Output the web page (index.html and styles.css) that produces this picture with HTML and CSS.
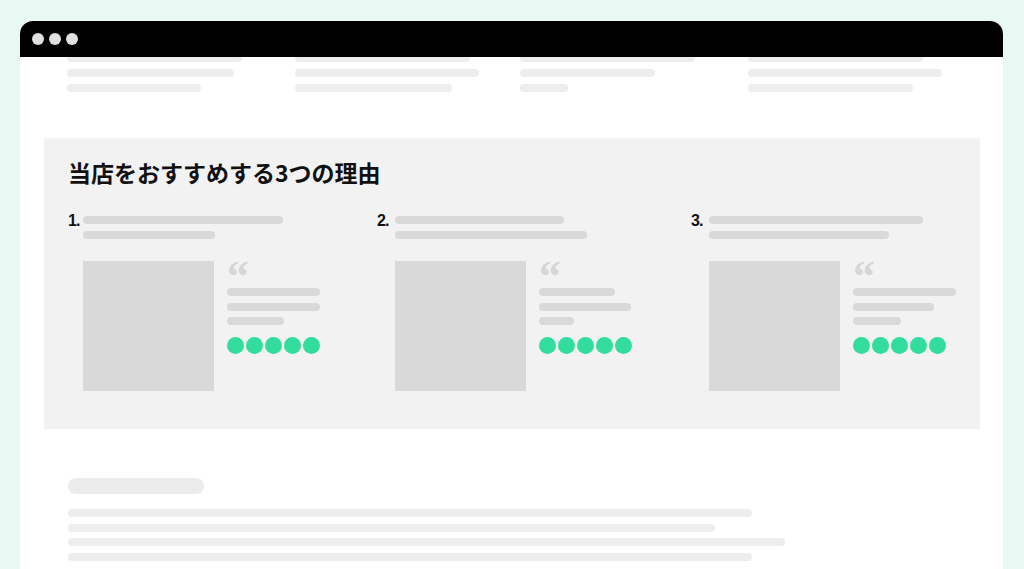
FILE: index.html
```html
<!DOCTYPE html>
<html lang="ja">
  <head>
    <meta charset="UTF-8" />
    <title>当店をおすすめする3つの理由</title>
    <link rel="stylesheet" href="styles.css">
  </head>
  <body>
    <div class="window">
      <div class="titlebar">
        <span class="dot"></span>
        <span class="dot"></span>
        <span class="dot"></span>
      </div>

      <div class="top-cols">
        <div class="col">
          <span class="line" style="width: 175px"></span>
          <span class="line" style="width: 167px"></span>
          <span class="line" style="width: 134px"></span>
        </div>
        <div class="col">
          <span class="line" style="width: 175px"></span>
          <span class="line" style="width: 184px"></span>
          <span class="line" style="width: 157px"></span>
        </div>
        <div class="col">
          <span class="line" style="width: 175px"></span>
          <span class="line" style="width: 135px"></span>
          <span class="line" style="width: 48px"></span>
        </div>
        <div class="col">
          <span class="line" style="width: 175px"></span>
          <span class="line" style="width: 194px"></span>
          <span class="line" style="width: 165px"></span>
        </div>
      </div>

      <section class="reasons">
        <h2 class="reasons-title">当店をおすすめする3つの理由</h2>
        <div class="reason-grid">
          <div class="reason">
            <div class="reason-head">
              <span class="num num-first">1.</span>
              <div class="head-lines">
                <span class="bar" style="width: 200px"></span>
                <span class="bar" style="width: 132px"></span>
              </div>
            </div>
            <div class="reason-body">
              <div class="photo"></div>
              <div class="review">
                <div class="quote">“</div>
                <div class="review-lines">
                  <span class="bar" style="width: 93px"></span>
                  <span class="bar" style="width: 93px"></span>
                  <span class="bar" style="width: 57px"></span>
                </div>
                <div class="stars">
                  <span></span><span></span><span></span><span></span><span></span>
                </div>
              </div>
            </div>
          </div>

          <div class="reason">
            <div class="reason-head">
              <span class="num">2.</span>
              <div class="head-lines">
                <span class="bar" style="width: 169px"></span>
                <span class="bar" style="width: 192px"></span>
              </div>
            </div>
            <div class="reason-body">
              <div class="photo"></div>
              <div class="review">
                <div class="quote">“</div>
                <div class="review-lines">
                  <span class="bar" style="width: 76px"></span>
                  <span class="bar" style="width: 92px"></span>
                  <span class="bar" style="width: 35px"></span>
                </div>
                <div class="stars">
                  <span></span><span></span><span></span><span></span><span></span>
                </div>
              </div>
            </div>
          </div>

          <div class="reason">
            <div class="reason-head">
              <span class="num">3.</span>
              <div class="head-lines">
                <span class="bar" style="width: 214px"></span>
                <span class="bar" style="width: 180px"></span>
              </div>
            </div>
            <div class="reason-body">
              <div class="photo"></div>
              <div class="review">
                <div class="quote">“</div>
                <div class="review-lines">
                  <span class="bar" style="width: 103px"></span>
                  <span class="bar" style="width: 81px"></span>
                  <span class="bar" style="width: 48px"></span>
                </div>
                <div class="stars">
                  <span></span><span></span><span></span><span></span><span></span>
                </div>
              </div>
            </div>
          </div>
        </div>
      </section>

      <div class="article">
        <span class="pill"></span>
        <div class="article-lines">
          <span class="line" style="width: 684px"></span>
          <span class="line" style="width: 647px"></span>
          <span class="line" style="width: 717px"></span>
          <span class="line" style="width: 684px"></span>
        </div>
      </div>
    </div>
  </body>
</html>
```

FILE: styles.css
```css
body {
  margin: 0;
  padding-top: 21px;
  background-color: #e8f8f2;
  font-family: 'Liberation Sans', 'Noto Sans CJK JP', sans-serif;
  color: #111;
}
.window {
  margin: 0 21px 0 20px;
  background-color: #fff;
  border-radius: 13px 13px 0 0;
  overflow: hidden;
  min-height: 560px;
}
.titlebar {
  height: 36px;
  background-color: #000;
  display: flex;
  align-items: center;
  gap: 5px;
  padding-left: 12px;
  position: relative;
  z-index: 1;
}
.dot {
  width: 12px;
  height: 12px;
  border-radius: 50%;
  background-color: #e0e0e0;
}
.line {
  display: block;
  height: 8px;
  border-radius: 4px;
  background-color: #ededed;
}
.top-cols {
  display: grid;
  grid-template-columns: 228px 225px 228px 1fr;
  padding-left: 47px;
  margin-top: -3px;
}
.col {
  display: flex;
  flex-direction: column;
  gap: 7px;
}
.reasons {
  margin: 46px 23px 0 24px;
  background-color: #f2f2f2;
  padding: 19px 0 38px 21px;
}
.reasons-title {
  margin: 0 0 25px 3px;
  font-family: 'Noto Sans CJK JP', sans-serif;
  font-size: 23px;
  line-height: 31px;
  font-weight: 700;
  color: #111;
}
.reason-grid {
  display: grid;
  grid-template-columns: 312px 314px 1fr;
}
.reason-head {
  display: flex;
  align-items: flex-start;
}
.num {
  width: 18px;
  font-size: 16px;
  line-height: 15px;
  font-weight: 700;
  letter-spacing: -0.8px;
}
.num-first {
  width: 15px;
  padding-left: 3px;
}
.head-lines,
.review-lines {
  display: flex;
  flex-direction: column;
  gap: 7px;
}
.head-lines {
  padding-top: 3px;
}
.bar {
  display: block;
  height: 8px;
  border-radius: 4px;
  background-color: #d9d9d9;
}
.reason-body {
  display: flex;
  gap: 13px;
  margin: 22px 0 0 18px;
}
.photo {
  width: 131px;
  height: 130px;
  background-color: #d9d9d9;
}
.quote {
  height: 27px;
  font-family: 'Liberation Serif', serif;
  font-weight: 700;
  font-size: 44px;
  line-height: 32px;
  color: #d6d6d6;
}
.review-lines {
  gap: 6.5px;
}
.stars {
  display: flex;
  gap: 2px;
  margin-top: 12px;
}
.stars span {
  width: 17px;
  height: 17px;
  border-radius: 50%;
  background-color: #31dc9c;
}
.article {
  padding: 49px 0 40px 48px;
}
.pill {
  display: block;
  width: 136px;
  height: 16px;
  border-radius: 8px;
  background-color: #ececec;
}
.article-lines {
  display: flex;
  flex-direction: column;
  gap: 6.5px;
  margin-top: 15px;
}
```
